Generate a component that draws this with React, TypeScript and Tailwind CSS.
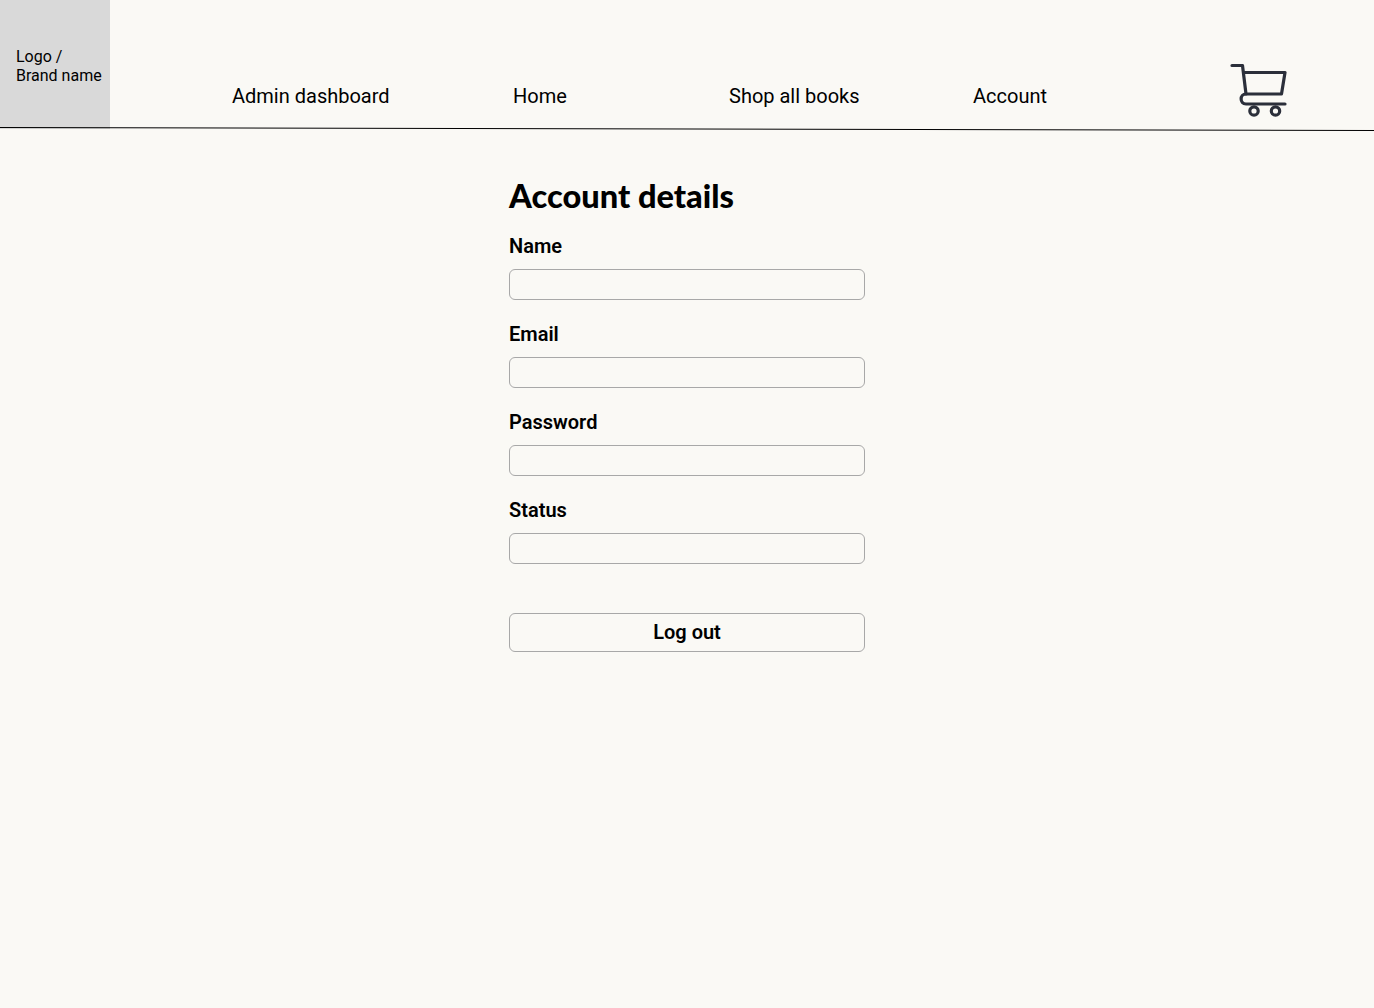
export default function App() {
  const fields = ["Name", "Email", "Password", "Status"];
  return (
    <div className="min-h-[1008px] bg-[#faf9f5] text-black font-['Roboto',sans-serif]">
      <header className="flex h-[127px]">
        <div className="flex h-[129px] w-[110px] shrink-0 items-end bg-[#d9d9d9] pb-[44px] pl-4 text-base leading-[19px]">
          <span>Logo /<br />Brand name</span>
        </div>
        <nav className="flex items-end pb-[19px] text-xl leading-6 whitespace-nowrap">
          <a className="ml-[122px] w-[281px]">Admin dashboard</a>
          <a className="w-[216px]">Home</a>
          <a className="w-[244px]">Shop all books</a>
          <a className="w-[256px]">Account</a>
        </nav>
        <svg width="60" height="56" viewBox="1229 63 60 56" fill="none" stroke="#2b2f3a" strokeWidth="3.2" strokeLinecap="round" strokeLinejoin="round" className="mt-[63px] shrink-0">
          <path d="M1232 65.5H1242.5L1246 94H1281.5L1285 72.5H1243.5" />
          <path d="M1246 94C1239.5 94 1239.5 104 1246 104H1285" />
          <circle cx="1254" cy="111" r="4.2" />
          <circle cx="1275.5" cy="111" r="4.2" />
        </svg>
      </header>
      <svg className="relative block h-[4px] w-full" viewBox="0 0 1374 4" preserveAspectRatio="none">
        <line x1="0" y1="0.5" x2="1374" y2="3.5" stroke="#000" strokeWidth="1" />
      </svg>
      <main className="ml-[509px] w-[356px] pt-[46px]">
        <h1 className="font-['Lato',sans-serif] text-[32.6px] leading-[38px] font-black">Account details</h1>
        <form className="mt-[19px] flex flex-col gap-[22px]">
          {fields.map((f) => (
            <label key={f} className="flex flex-col gap-[11px] text-xl leading-6 font-semibold">
              {f}
              <input className="h-[31px] w-full rounded-md border border-[#a8a8a8] bg-transparent" />
            </label>
          ))}
        </form>
        <button className="mt-[49px] h-[39px] w-full rounded-md border border-[#a8a8a8] pb-[2px] text-xl leading-6 font-semibold">
          Log out
        </button>
      </main>
    </div>
  );
}
